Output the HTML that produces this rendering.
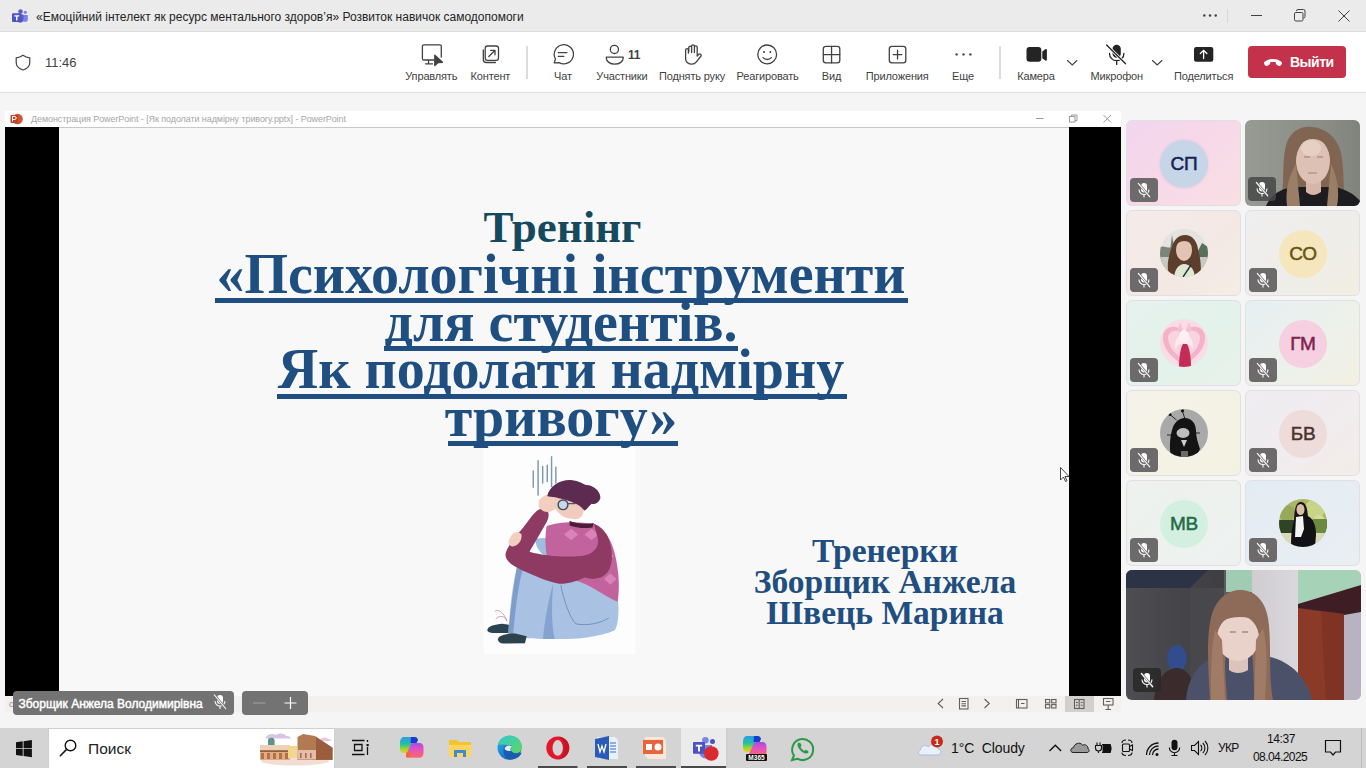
<!DOCTYPE html>
<html><head><meta charset="utf-8">
<style>
*{box-sizing:border-box;margin:0;padding:0}
html,body{width:1366px;height:768px;overflow:hidden;background:#f5f5f5;font-family:"Liberation Sans",sans-serif;position:relative}
.a{position:absolute}
#titlebar{left:0;top:0;width:1366px;height:31px;background:#ebebeb}
#toolbar{left:0;top:31px;width:1366px;height:62px;border-top:1px solid #dedede;background:#fff;border-bottom:1px solid #e0e0e0}
.lbl{position:absolute;font-size:11px;color:#424242;white-space:nowrap;transform:translateX(-50%);top:70px;letter-spacing:-0.15px}
.slide-t{position:absolute;white-space:nowrap;font-family:"Liberation Serif",serif;font-weight:bold;line-height:1}
.tile{position:absolute;width:115px;height:86px;border-radius:6px;border:1px solid #e2dfe2;overflow:hidden}
.av{position:absolute;left:33px;top:19px;width:48px;height:48px;border-radius:50%;text-align:center;line-height:48px;font-size:19px;-webkit-text-stroke:0.5px currentColor;letter-spacing:-0.2px}
.mute{position:absolute;left:2.5px;top:57px;width:28px;height:24px;border-radius:4px;background:rgba(90,90,90,.8)}
.tb{position:absolute;top:728px;height:40px}
</style></head>
<body>
<!-- title bar -->
<div id="titlebar" class="a"></div>
<svg class="a" style="left:0;top:0" width="1366" height="31" viewBox="0 0 1366 31">
 <g fill="#5b5fc7">
  <circle cx="20.5" cy="11.5" r="2.3"/>
  <circle cx="25.3" cy="12.3" r="1.6" fill="#7b83eb"/>
  <path d="M22.5 15h5.3v4.2a2.6 2.6 0 0 1-5.3 0z" fill="#7b83eb"/>
  <path d="M17 14.5h6.5v5.5a3.3 3.3 0 0 1-6.5 0z" fill="#5b5fc7"/>
  <rect x="12" y="13.2" width="9.5" height="8.8" rx="1" fill="#4b53bc"/>
  <path d="M14.3 15.2h5v1.4h-1.8v4h-1.4v-4h-1.8z" fill="#fff"/>
 </g>
 <g fill="#424242"><circle cx="1204.3" cy="15.6" r="1.25"/><circle cx="1210" cy="15.6" r="1.25"/><circle cx="1215.7" cy="15.6" r="1.25"/></g>
 <line x1="1227.5" y1="9" x2="1227.5" y2="23" stroke="#d6d6d6"/>
 <line x1="1251" y1="15.5" x2="1262" y2="15.5" stroke="#424242" stroke-width="1"/>
 <g fill="none" stroke="#424242" stroke-width="1">
  <rect x="1294.5" y="12.5" width="8.5" height="8.5" rx="1.3"/>
  <path d="M1296.5 11.2 v-0.2 a1.5 1.5 0 0 1 1.5-1.5 h5.5 a1.5 1.5 0 0 1 1.5 1.5 v5.5 a1.5 1.5 0 0 1-1.5 1.5"/>
  <path d="M1338.5 10.5 l11 11 M1349.5 10.5 l-11 11"/>
 </g>
</svg>
<div class="a" style="left:36px;top:10px;font-size:12px;color:#242424;white-space:nowrap;line-height:15px">«Емоційний інтелект як ресурс ментального здоров’я» Розвиток навичок самодопомоги</div>
<!-- toolbar -->
<div id="toolbar" class="a"></div>
<svg class="a" style="left:0;top:31px" width="1366" height="61" viewBox="0 31 1366 61">
 <g fill="none" stroke="#424242" stroke-width="1.2" stroke-linecap="round" stroke-linejoin="round">
  <path d="M23 56.5 C19.5 55.5 16.3 53.8 16.3 53.8 V60.8 C16.3 65.5 19.5 68.5 23 69.8 C26.5 68.5 29.7 65.5 29.7 60.8 V57.8 C26.5 57.3 24.5 56.5 23 55.5 C21.5 56.5 19.5 57.3 16.3 57.8" stroke="none"/>
  <path d="M23 55.3 C25 56.8 27.3 57.6 29.8 57.8 V62.5 C29.8 66 27 68.8 23 70 C19 68.8 16.2 66 16.2 62.5 V57.8 C18.7 57.6 21 56.8 23 55.3Z"/>
 </g>
 <g fill="none" stroke="#424242" stroke-width="1.3" stroke-linecap="round" stroke-linejoin="round">
  <!-- manage -->
  <path d="M434 60 H424 a1.6 1.6 0 0 1-1.6-1.6 V46.4 a1.6 1.6 0 0 1 1.6-1.6 h15.7 a1.6 1.6 0 0 1 1.6 1.6 V57"/>
  <path d="M428.5 60.5 v3.2 M425.5 63.8 h7"/>
  <path d="M434.8 55.2 L442.5 62.3 L438.2 62.6 L434.8 65.6Z" fill="#424242"/>
  <!-- content -->
  <path d="M483.3 50 v9.5 a3 3 0 0 0 3 3 h9.2"/>
  <rect x="485.2" y="46" width="13.3" height="14.3" rx="2.3"/>
  <path d="M488.8 56.5 l6-6 M490.5 50.3 h4.5 v4.5"/>
  <!-- divider -->
  <!-- chat -->
  <path d="M554.2 62.8 l1.3-3.8 a9.6 9.6 0 1 1 3.6 3.6 z"/>
  <path d="M558.3 52.6 h8.6 M558.3 56.4 h5.5"/>
  <!-- participants -->
  <circle cx="614.4" cy="49.4" r="4.1"/>
  <path d="M606.3 57.2 h16.9 v0.9 c0 3.4-3.7 6-8.45 6 c-4.75 0-8.45-2.6-8.45-6z"/>
  <!-- hand -->
  <path d="M688.8 52 V47.5 a1.4 1.4 0 0 1 2.8 0 V52.5 M691.6 52 V46.2 a1.4 1.4 0 0 1 2.8 0 V52.5 M694.4 52.5 V47.3 a1.4 1.4 0 0 1 2.8 0 V56 l1.6-1.7 a1.4 1.4 0 0 1 2.2 1.7 l-4.6 5.8 c-1.1 1.4-2.3 2.3-4.6 2.3 h-0.8 c-3 0-5.4-2.4-5.4-5.4 V50 a1.4 1.4 0 0 1 2.8 0 V53"/>
  <!-- react -->
  <circle cx="767.2" cy="54.4" r="9.4"/>
  <path d="M763 57.6 c2.4 2.5 6 2.5 8.4 0"/>
  <!-- view -->
  <rect x="823.3" y="46.3" width="16.5" height="16.5" rx="2.6"/>
  <path d="M831.55 46.3 v16.5 M823.3 54.55 h16.5"/>
  <!-- apps -->
  <rect x="889.3" y="46.3" width="16.5" height="16.5" rx="2.6"/>
  <path d="M897.55 50.2 v8.7 M893.2 54.55 h8.7"/>
  <!-- share arrow -->
 </g>
 <g fill="#424242">
  <circle cx="764" cy="51.9" r="1"/><circle cx="770.4" cy="51.9" r="1"/>
  <circle cx="956.6" cy="54.4" r="1.2"/><circle cx="963.5" cy="54.4" r="1.2"/><circle cx="970.4" cy="54.4" r="1.2"/>
 </g>
 <line x1="527" y1="46" x2="527" y2="79" stroke="#d1d1d1" stroke-width="1.5"/>
 <line x1="1000" y1="46" x2="1000" y2="79" stroke="#d1d1d1" stroke-width="1.5"/>
 <g fill="#242424">
  <rect x="1026.5" y="47" width="14.8" height="14.8" rx="3"/>
  <path d="M1042.3 51.5 l3-2.3 a1 1 0 0 1 1.6 0.8 v9.7 a1 1 0 0 1-1.6 0.8 l-3-2.3z"/>
  <rect x="1112.5" y="44.8" width="8.3" height="13" rx="4.15"/>
  <rect x="1194" y="47" width="19.3" height="14.8" rx="2.2"/>
 </g>
 <g fill="none" stroke="#242424" stroke-width="1.3" stroke-linecap="round">
  <path d="M1067.5 60.5 l4.7 4.5 l4.7-4.5 M1152.5 60.5 l4.7 4.5 l4.7-4.5" stroke="#424242" stroke-width="1.1"/>
  <path d="M1109.5 53.5 a7.2 7.2 0 0 0 14.4 0 M1116.7 60.8 v3.6"/>
  <path d="M1106.6 45 l19 18.7" stroke="#fff" stroke-width="3"/>
  <path d="M1106.6 45 l19 18.7"/>
  <path d="M1203.6 58.5 v-8 M1200.3 53.5 l3.3-3.2 l3.3 3.2" stroke="#fff" stroke-width="1.3"/>
 </g>
</svg>
<div class="a" style="left:45px;top:55px;font-size:13px;color:#424242;line-height:16px">11:46</div>
<div class="a" style="left:628px;top:48px;font-size:12px;font-weight:bold;color:#424242;line-height:14px;letter-spacing:-0.3px">11</div>
<div class="lbl" style="left:431.3px">Управлять</div>
<div class="lbl" style="left:490.4px">Контент</div>
<div class="lbl" style="left:563px">Чат</div>
<div class="lbl" style="left:621.9px">Участники</div>
<div class="lbl" style="left:692px">Поднять руку</div>
<div class="lbl" style="left:767.6px">Реагировать</div>
<div class="lbl" style="left:831.6px">Вид</div>
<div class="lbl" style="left:897.2px">Приложения</div>
<div class="lbl" style="left:963px">Еще</div>
<div class="lbl" style="left:1036px">Камера</div>
<div class="lbl" style="left:1116.8px">Микрофон</div>
<div class="lbl" style="left:1203.6px">Поделиться</div>
<div class="a" style="left:1248px;top:46px;width:98px;height:32px;background:#c4314b;border-radius:4px"></div>
<svg class="a" style="left:1262px;top:55px" width="22" height="14" viewBox="0 0 22 14">
 <path d="M2.5 9.5 c-0.8-0.9-0.6-2.3 0.4-3 C5.3 4.8 8 4 11 4 s5.7 0.8 8.1 2.5 c1 0.7 1.2 2.1 0.4 3 l-0.9 1 c-0.6 0.6-1.5 0.7-2.2 0.3 l-1.9-1.2 c-0.6-0.4-0.9-1-0.8-1.7 l0.1-0.8 C12.6 6.8 9.4 6.8 8.2 7.1 l0.1 0.8 c0.1 0.7-0.2 1.3-0.8 1.7 L5.6 10.8 c-0.7 0.4-1.6 0.3-2.2-0.3z" fill="#fff"/>
</svg>
<div class="a" style="left:1290px;top:54px;font-size:14px;font-weight:bold;color:#fff;line-height:17px;letter-spacing:-0.5px">Выйти</div>

<!-- main bg -->
<!-- ppt window -->
<div class="a" style="left:5px;top:111px;width:1116px;height:16px;background:#fff"></div>
<svg class="a" style="left:5px;top:111px" width="1116" height="16" viewBox="5 111 1116 16">
 <circle cx="17.5" cy="119" r="5.3" fill="#d35230"/>
 <rect x="10.5" y="115" width="7.5" height="8" rx="1" fill="#b7472a"/>
 <path d="M12.5 121.5 v-5 h2.2 a1.5 1.5 0 0 1 0 3 h-2.2" fill="none" stroke="#fff" stroke-width="1"/>
 <g fill="none" stroke="#9a9a9a" stroke-width="1">
  <path d="M1036 118.5 h7.5"/>
  <rect x="1069.5" y="116.5" width="5.5" height="5.5"/><path d="M1071.5 116.5 v-1.5 h5.5 v5.5 h-2"/>
  <path d="M1103.5 115 l7.5 7.5 M1111 115 l-7.5 7.5"/>
 </g>
</svg>
<div class="a" style="left:31px;top:114px;font-size:9px;color:#a6a6a6;line-height:11px;white-space:nowrap;letter-spacing:-0.09px">Демонстрация PowerPoint - [Як подолати надмірну тривогу.pptx] - PowerPoint</div>
<div class="a" style="left:5px;top:127px;width:54px;height:569px;background:#000"></div>
<div class="a" style="left:59px;top:127px;width:1010px;height:569px;background:#f8f8f8;border-top:1px solid #c8c8c8"></div>
<div class="a" style="left:1069px;top:127px;width:52px;height:569px;background:#000"></div>
<!-- illustration -->
<svg class="a" style="left:478px;top:440px" width="162" height="220" viewBox="0 0 566 768">
 <rect x="20" y="25" width="530" height="722" fill="#fdfdfd"/>
 <g stroke="#6f8fa8" stroke-width="5" stroke-linecap="round" opacity=".9">
  <path d="M193 108 V165 M210 72 V192 M226 92 V150 M242 88 V145 M257 58 V162 M272 95 V150"/>
 </g>
 <!-- jeans -->
 <path d="M140 425 C180 415 230 420 260 440 C330 480 420 520 488 545 C495 610 488 650 478 664 C420 690 340 696 268 695 L227 695 C180 695 130 690 106 684 C110 600 120 500 140 425Z" fill="#a9c1e2"/>
 <path d="M140 425 C125 500 112 600 106 684 L122 686 C130 600 140 500 160 440Z" fill="#7f9dcb"/>
 <path d="M263 501 C245 560 232 640 227 695 L268 695 C255 640 258 560 263 501Z" fill="#86a3d0"/>
 <path d="M289 506 C300 560 320 620 342 642 C380 650 430 640 457 621" fill="none" stroke="#6a88b8" stroke-width="3"/>
 <path d="M200 345 C250 335 300 350 330 395 L240 410 C215 395 200 370 200 345Z" fill="#9fbde0"/>
 <!-- shoes -->
 <path d="M33 662 C36 650 60 644 85 642 L108 645 L106 674 L50 674 C38 673 31 668 33 662Z" fill="#2b4550"/>
 <path d="M70 694 C74 682 100 676 130 676 L170 685 L164 710 L88 711 C76 710 68 702 70 694Z" fill="#2a434d"/>
 <path d="M59 598 C70 590 90 600 101 632 M62 625 C75 610 95 615 101 632" fill="none" stroke="#c890a8" stroke-width="3"/>
 <!-- sweater body -->
 <path d="M240 300 C280 285 350 282 410 295 C455 315 480 380 488 450 C495 500 492 540 488 565 C450 548 410 520 380 505 C330 485 280 470 250 440 C235 400 232 340 240 300Z" fill="#c2639e"/>
 <g fill="#d983b6">
  <path d="M300 330 l25 -20 l25 20 l-25 20z M372 330 l25 -20 l25 20 l-25 20z M425 405 l25 -20 l25 20 l-25 20z M440 485 l22 -20 l22 20 l-22 20z M400 458 l22 -18 l22 18 l-22 18z"/>
 </g>
 <!-- arm -->
 <path d="M405 292 C450 310 472 360 467 420 C462 470 430 495 373 480 C330 500 290 505 279 501 C230 490 190 470 164 459 C120 440 96 423 96 400 C98 370 150 320 185 270 C200 250 215 235 235 240 C250 248 250 270 238 290 C215 330 195 365 180 390 C230 405 300 410 360 405 C400 400 420 380 420 350Z" fill="#8e3a62"/>
 <path d="M320 282 C340 292 380 295 405 290 L400 305 C370 310 340 305 320 298Z" fill="#4e1c3a"/>
 <!-- hands -->
 <path d="M212 212 C232 186 272 180 302 195 L307 220 C292 235 272 240 252 250 C237 255 217 245 212 232Z" fill="#f3cfc0"/>
 <path d="M108 350 C118 320 140 315 152 330 C155 350 140 370 120 372 C110 370 105 360 108 350Z" fill="#f3cfc0"/>
 <!-- head -->
 <path d="M267 205 C300 208 345 212 368 238 C372 262 357 278 337 276 C300 275 278 258 267 232Z" fill="#f1cbbb"/>
 <path d="M242 195 C250 160 290 135 330 140 C350 143 365 150 377 157 C400 155 432 180 427 205 C420 222 405 226 397 222 C385 232 375 250 370 245 C352 218 300 208 270 200 C258 198 248 198 242 195Z" fill="#5d2a52"/>
 <circle cx="297" cy="226" r="17" fill="#c8d8e8" stroke="#3f4f63" stroke-width="5"/>
 <path d="M314 222 H340" stroke="#3f4f63" stroke-width="4"/>
</svg>
<!-- slide text -->
<div class="slide-t" style="left:0;width:1125px;text-align:center;top:205px;font-size:45px;color:#154a5e">Тренінг</div>
<div class="slide-t" style="left:0;width:1122px;text-align:center;top:246px;font-size:56px;color:#1f4e80">«Психологічні інструменти</div>
<div class="slide-t" style="left:0;width:1122px;text-align:center;top:294px;font-size:56px;color:#1f4e80">для студентів.</div>
<div class="slide-t" style="left:0;width:1122px;text-align:center;top:341px;font-size:56px;color:#1f4e80">Як подолати надмірну</div>
<div class="slide-t" style="left:0;width:1122px;text-align:center;top:389px;font-size:56px;color:#1f4e80">тривогу»</div>
<div class="a" style="left:215px;top:298px;width:693px;height:5px;background:#1f4e80"></div>
<div class="a" style="left:384px;top:346px;width:354px;height:4.5px;background:#1f4e80"></div>
<div class="a" style="left:277px;top:394px;width:570px;height:4.5px;background:#1f4e80"></div>
<div class="a" style="left:448px;top:441px;width:230px;height:5px;background:#1f4e80"></div>
<div class="slide-t" style="left:0;width:1770px;text-align:center;top:535px;font-size:33.5px;color:#1f4e80;line-height:31px">Тренерки<br>Зборщик Анжела<br>Швець Марина</div>
<div class="a" style="left:5px;top:696px;width:1116px;height:16px;background:#f3f1f0"></div>

<svg class="a" style="left:1060px;top:467px" width="10" height="16" viewBox="0 0 10 16"><path d="M0.5 0.5 V13 L3.5 10 L5.5 14.5 L7 13.8 L5 9.5 H9Z" fill="#fff" stroke="#333" stroke-width="0.9"/></svg>
<!-- gallery -->
<svg width="0" height="0" style="position:absolute">
 <defs>
  <symbol id="micoff" viewBox="0 0 28 24">
   <rect x="11" y="5" width="6" height="9.5" rx="3" fill="#fff"/>
   <path d="M9 11.5 a5 5 0 0 0 10 0 M14 16.5 v3" fill="none" stroke="#fff" stroke-width="1.1"/>
   <path d="M8.3 5.3 L19.8 18.8" stroke="#6d6a6b" stroke-width="2.4"/>
   <path d="M8.3 5.3 L19.8 18.8" stroke="#fff" stroke-width="1.1" stroke-linecap="round"/>
  </symbol>
 </defs>
</svg>
<div class="tile" style="left:1126px;top:120px;background:linear-gradient(135deg,#f2d6ee 0%,#f7d8e8 50%,#f8e0e4 100%)">
 <div class="av" style="background:#c7d5e8;color:#13244f;box-shadow:0 0 3px rgba(0,0,0,.08)">СП</div>
 <svg class="mute" style="background:#6d6a6b" viewBox="0 0 28 24"><use href="#micoff"/></svg>
</div>
<div class="tile" style="left:1245px;top:120px;background:linear-gradient(90deg,#979b94 0%,#8f938c 35%,#8b8d85 70%,#80837c 100%);border:none">
 <svg class="a" style="left:0;top:0" width="116" height="86" viewBox="0 0 116 86">
  <path d="M36 86 C40 64 36 40 42 22 C47 10 57 6 67 7 C81 8 92 17 96 33 C100 52 97 70 102 86Z" fill="#806652"/>
  <path d="M21 86 C26 74 36 69 48 67 L88 67 C102 69 110 75 116 82 V86Z" fill="#1d1d21"/>
  <path d="M61 58 H76 V72 C70 76 66 76 61 72Z" fill="#d6b6a8"/>
  <ellipse cx="68" cy="41" rx="17" ry="23" fill="#dcc1b4"/>
  <ellipse cx="66" cy="28" rx="10" ry="8" fill="#e6d0c4"/>
  <path d="M51 36 C50 20 58 11 68 11 C80 11 88 20 87 36 C84 26 80 20 68 19 C58 19 53 26 51 36Z" fill="#806652"/>
  <path d="M42 86 C40 70 44 56 51 44 L55 86Z M92 86 C95 72 92 56 86 44 L82 86Z" fill="#9a7e68"/>
  <path d="M59 37 h6 M72 37 h6" stroke="#9a7c70" stroke-width="1.2"/>
  <path d="M63 53 h9" stroke="#b8958a" stroke-width="1.5"/>
 </svg>
 <svg class="mute" style="background:rgba(70,72,70,.85)" viewBox="0 0 28 24"><use href="#micoff"/></svg>
</div>
<div class="tile" style="left:1126px;top:210px;background:linear-gradient(135deg,#f5ebe8 0%,#f3e8e4 60%,#f5ede6 100%)">
 <svg class="a" style="left:33px;top:18px" width="48" height="48" viewBox="0 0 48 48">
  <defs><clipPath id="cC"><circle cx="24" cy="24" r="24"/></clipPath></defs>
  <g clip-path="url(#cC)">
   <rect width="48" height="48" fill="#e4e3df"/>
   <path d="M0 18 C4 16 8 20 12 18 V48 H0Z" fill="#7a8478"/>
   <path d="M9 30 L12 6 L16 30Z" fill="#6a7868"/>
   <path d="M36 26 L42 14 L48 18 V30 H36Z" fill="#58705a"/>
   <rect x="0" y="28" width="48" height="20" fill="#c8cac2"/>
   <path d="M9 46 C6 36 9 26 12 18 C14 10 19 6 25 6 C32 6 37 12 38 20 C40 28 42 38 40 46Z" fill="#5d3d2c"/>
   <ellipse cx="24" cy="21" rx="8" ry="11" fill="#e3c3b3"/>
   <path d="M15 18 C16 10 20 7 25 7 C30 7 33 11 33 17 C30 13 27 12 24 12 C20 12 17 14 15 18Z" fill="#5d3d2c"/>
   <path d="M14 48 C15 40 19 35 24 35 C30 35 34 40 35 48Z" fill="#dfe8d2"/>
   <path d="M31 36 L23 48" stroke="#263030" stroke-width="1.4"/>
  </g>
 </svg>
 <svg class="mute" style="background:#6d6a6b" viewBox="0 0 28 24"><use href="#micoff"/></svg>
</div>
<div class="tile" style="left:1245px;top:210px;background:linear-gradient(135deg,#f0eff0 0%,#eeede8 60%,#f1efe2 100%)">
 <div class="av" style="background:#f5e6bd;color:#6b5416">СО</div>
 <svg class="mute" style="background:#6d6a6b" viewBox="0 0 28 24"><use href="#micoff"/></svg>
</div>
<div class="tile" style="left:1126px;top:300px;background:linear-gradient(135deg,#e6f2ee 0%,#e3f2ea 60%,#e8f2ea 100%)">
 <svg class="a" style="left:33px;top:18px" width="48" height="48" viewBox="0 0 48 48">
  <defs><clipPath id="cE"><circle cx="24" cy="24" r="24"/></clipPath></defs>
  <g clip-path="url(#cE)">
   <rect width="48" height="48" fill="#f9dde6"/>
   <path d="M24 46 C10 38 2 28 3 17 C4 7 16 4 24 13 C32 4 44 7 45 17 C46 28 38 38 24 46Z" fill="#f2b2c8"/>
   <path d="M24 41 C13 34 8 26 8 18 C9 11 18 9 24 16 C30 9 39 11 40 18 C40 26 35 34 24 41Z" fill="#f8d4e0"/>
   <path d="M15 30 C14 22 18 16 24 14 C30 16 34 22 33 30 L30 26 L24 24 L18 26Z" fill="#fbeaf0"/>
   <path d="M19 48 C19 40 20 30 23 25 H27 C30 30 31 40 31 48Z" fill="#c42c58"/>
   <ellipse cx="24" cy="17" rx="5" ry="6" fill="#fdf0f4"/>
   <path d="M17 12 L20 3 L23 11Z M26 11 L29 3 L32 12Z" fill="#f6c2d4"/>
  </g>
 </svg>
 <svg class="mute" style="background:#6d6a6b" viewBox="0 0 28 24"><use href="#micoff"/></svg>
</div>
<div class="tile" style="left:1245px;top:300px;background:linear-gradient(135deg,#e6eff3 0%,#edf1ea 60%,#f2f0e2 100%)">
 <div class="av" style="background:#f6cfe0;color:#7b2348">ГМ</div>
 <svg class="mute" style="background:#6d6a6b" viewBox="0 0 28 24"><use href="#micoff"/></svg>
</div>
<div class="tile" style="left:1126px;top:390px;background:linear-gradient(135deg,#f5f2ea 0%,#f4f2e4 60%,#f3f2e2 100%)">
 <svg class="a" style="left:33px;top:18px" width="48" height="48" viewBox="0 0 48 48">
  <defs><clipPath id="cG"><circle cx="24" cy="24" r="24"/></clipPath></defs>
  <g clip-path="url(#cG)">
   <rect width="48" height="48" fill="#a9a9a9"/>
   <path d="M10 5.5 L16.5 11 M22 1 L25 10 M7 26 H13 M35 24 H40" stroke="#1a1a1a" stroke-width="0.9"/>
   <circle cx="10" cy="5.5" r="1.5" fill="#111"/><circle cx="22.5" cy="1.8" r="1.6" fill="#111"/>
   <path d="M11 48 C9 38 10 26 13 18 C16 11 21 9 25 9 C31 9 36 14 36 22 C36 28 38 34 40 40 L36 48Z" fill="#141414"/>
   <ellipse cx="23" cy="24" rx="6.5" ry="5" fill="#bdbdbd"/>
   <path d="M16 22 C17 15 21 12 25 12 C29 12 31 16 31 21 C28 18 24 17 21 19Z" fill="#141414"/>
   <path d="M21 31 L24 38 L27 31Z" fill="#cfcfcf"/>
   <path d="M21 48 V42 H28 V48Z" fill="#6a6a6a"/>
  </g>
 </svg>
 <svg class="mute" style="background:#6d6a6b" viewBox="0 0 28 24"><use href="#micoff"/></svg>
</div>
<div class="tile" style="left:1245px;top:390px;background:linear-gradient(135deg,#eeedf1 0%,#f1ecee 60%,#f3ede8 100%)">
 <div class="av" style="background:#eddcd9;color:#4a3330">БВ</div>
 <svg class="mute" style="background:#6d6a6b" viewBox="0 0 28 24"><use href="#micoff"/></svg>
</div>
<div class="tile" style="left:1126px;top:480px;background:linear-gradient(135deg,#eef1ee 0%,#edf2ef 60%,#eef1f1 100%)">
 <div class="av" style="background:#d3efdf;color:#1f6a45">МВ</div>
 <svg class="mute" style="background:#6d6a6b" viewBox="0 0 28 24"><use href="#micoff"/></svg>
</div>
<div class="tile" style="left:1245px;top:480px;background:linear-gradient(135deg,#e4ecf3 0%,#e6edf3 60%,#e9eef1 100%)">
 <svg class="a" style="left:33px;top:18px" width="48" height="48" viewBox="0 0 48 48">
  <defs><clipPath id="cJ"><circle cx="24" cy="24" r="24"/></clipPath></defs>
  <g clip-path="url(#cJ)">
   <rect width="48" height="48" fill="#a9b866"/>
   <circle cx="36" cy="10" r="10" fill="#c8d488"/><circle cx="8" cy="14" r="8" fill="#98a858"/>
   <circle cx="40" cy="22" r="6" fill="#d4dc98"/>
   <rect x="0" y="21" width="48" height="13" fill="#2e4424"/>
   <rect x="34" y="20" width="14" height="14" fill="#6a8a40"/>
   <rect x="0" y="34" width="48" height="14" fill="#d8dab8"/>
   <path d="M15 24 C15 10 17 3 22 3 C27 3 29 10 29 22 Z" fill="#1a1414"/>
   <ellipse cx="21.5" cy="10.5" rx="4" ry="5.5" fill="#dcbcaa"/>
   <path d="M12 48 C12 34 13 22 18 17 L26 16 C34 18 37 26 37 36 L36 48Z" fill="#121216"/>
   <path d="M17 18 L24 17 L25 30 L22 38 H16Z" fill="#f4f4f2"/>
  </g>
 </svg>
 <svg class="mute" style="background:#6d6a6b" viewBox="0 0 28 24"><use href="#micoff"/></svg>
</div>
<div class="a" style="left:1126px;top:570px;width:235px;height:130px;border-radius:6px;overflow:hidden">
 <svg class="a" style="left:0;top:0" width="235" height="130" viewBox="0 0 235 130">
  <defs>
   <linearGradient id="wallL" x1="0" y1="0" x2="1" y2="0"><stop offset="0" stop-color="#4e4d52"/><stop offset="1" stop-color="#3e3d42"/></linearGradient>
   <linearGradient id="wallW" x1="0" y1="0" x2="1" y2="0"><stop offset="0" stop-color="#cfcdd2"/><stop offset="1" stop-color="#dad8dc"/></linearGradient>
  </defs>
  <rect width="235" height="130" fill="#cbc7cc"/>
  <rect x="0" y="0" width="100" height="130" fill="url(#wallL)"/>
  <path d="M0 0 H82 L64 18 H0Z" fill="#2c3344"/>
  <rect x="64" y="18" width="36" height="112" fill="#48474c"/>
  <rect x="98" y="0" width="30" height="130" fill="#5c5b60"/>
  <path d="M100 0 H128 V22 H100Z" fill="#9fccb2"/>
  <rect x="126" y="0" width="48" height="130" fill="url(#wallW)"/>
  <path d="M172 0 H235 V15 L172 34Z" fill="#a6d2b8"/>
  <path d="M172 34 L235 15 V130 H172Z" fill="#b9b2c0"/>
  <path d="M172 34 L235 15 V42 L218 45 L172 40Z" fill="#3e1e24"/>
  <path d="M172 38 L218 44 V130 H172Z" fill="#8a3a26"/>
  <path d="M195 42 L218 44 V130 H200Z" fill="#7a3024" opacity=".7"/>
  <ellipse cx="51" cy="88" rx="10" ry="13" fill="#2f4d9a" opacity=".85"/>
  
  <path d="M28 130 C30 108 40 98 52 98 C64 100 70 114 70 130Z" fill="#3b2b2d"/>
  <path d="M60 130 C62 104 76 90 94 85 H134 C160 88 180 104 186 130Z" fill="#4b5169"/>
  <path d="M84 130 C82 96 80 64 86 44 C92 26 104 20 114 20 C128 20 139 30 142 48 C146 72 142 104 147 130 H129 C127 112 128 96 126 84 H100 C98 96 100 112 101 130Z" fill="#8d6b58"/>
  <path d="M103 78 H122 V100 C116 104 108 104 103 100Z" fill="#dcc3bb"/>
  <ellipse cx="112" cy="68" rx="21" ry="23" fill="#e9d2ca"/>
  <path d="M86 60 C88 32 100 22 114 22 C130 22 140 34 140 60 C134 52 128 47 114 47 C100 47 94 52 86 60Z" fill="#8d6b58"/>
  <path d="M85 130 C85 100 85 78 89 60 L96 70 L99 130Z M139 130 C141 100 142 78 137 58 L130 70 L128 130Z" fill="#a07c66"/>
  <path d="M104 62 h6 M116 62 h6" stroke="#8a6a62" stroke-width="1.2"/>
 </svg>
 <svg class="mute" style="left:7px;top:98px;background:rgba(40,40,40,.85)" viewBox="0 0 28 24"><use href="#micoff"/></svg>
</div>
<!-- ppt status bar -->
<svg class="a" style="left:925px;top:694px" width="200" height="20" viewBox="925 694 200 20">
 <rect x="1065" y="696" width="29" height="16" fill="#d2d0ce"/>
 <g fill="none" stroke="#5f5f5f" stroke-width="1.1">
  <path d="M943 699 l-4.8 4.5 l4.8 4.5 M984.5 699 l4.8 4.5 l-4.8 4.5"/>
  <rect x="959.5" y="698.5" width="8.5" height="10.5"/>
  <path d="M961.5 701.5 h4.5 M961.5 703.7 h4.5 M961.5 705.9 h4.5"/>
  <rect x="1016.5" y="699.5" width="10.5" height="8.5"/>
  <path d="M1018.5 699.5 v8.5 M1021 703.5 h3.5"/>
  <rect x="1045.5" y="699.5" width="4.3" height="3.4"/><rect x="1051.7" y="699.5" width="4.3" height="3.4"/>
  <rect x="1045.5" y="704.6" width="4.3" height="3.4"/><rect x="1051.7" y="704.6" width="4.3" height="3.4"/>
  <rect x="1074.5" y="699.5" width="9.5" height="9"/><path d="M1079.2 699.5 v9 M1076 702.5 h1.8 M1080.8 702.5 h1.8 M1076 705.2 h1.8 M1080.8 705.2 h1.8"/>
  <rect x="1103.5" y="698.5" width="9.5" height="6.5"/><path d="M1108.2 705 v4 M1105.5 709.5 h5.5 M1106 701.5 h4.5"/>
 </g>
</svg>
<div class="a" style="left:13px;top:691px;width:221px;height:24px;background:#737373;border-radius:4px"></div>
<div class="a" style="left:9px;top:699px;font-size:9px;color:#8a8a8a;line-height:10px">с</div>
<div class="a" style="left:18.5px;top:697px;font-size:12px;-webkit-text-stroke:0.45px #fff;color:#fff;line-height:14px;white-space:nowrap">Зборщик Анжела Володимирівна</div>
<svg class="a" style="left:212px;top:693px" width="16" height="18" viewBox="0 0 16 18">
 <rect x="5" y="2" width="6" height="9" rx="3" fill="#fff"/>
 <path d="M3 8 a5 5 0 0 0 10 0 M8 13 v3" fill="none" stroke="#fff" stroke-width="1.1"/>
 <path d="M2 1.5 L14 16" stroke="#737373" stroke-width="2.5"/><path d="M2 1.5 L14 16" stroke="#fff" stroke-width="1.1"/>
</svg>
<div class="a" style="left:242px;top:691px;width:66px;height:24px;background:#737373;border-radius:4px"></div>
<svg class="a" style="left:242px;top:691px" width="66" height="24" viewBox="0 0 66 24">
 <path d="M11 12 h12.5" stroke="#9c9c9c" stroke-width="1.2"/>
 <path d="M42.5 12 h12 M48.5 6 v12" stroke="#fff" stroke-width="1.2"/>
</svg>

<!-- taskbar -->
<div class="a" style="left:0;top:728px;width:1366px;height:40px;background:#d4d4d4"></div>
<div class="a" style="left:681px;top:728px;width:45px;height:40px;background:#ebebeb"></div>
<div class="a" style="left:726px;top:728px;width:2px;height:40px;background:#d0d0d0"></div>
<div class="a" style="left:48px;top:728px;width:287px;height:40px;background:#fff;border:1px solid #cfcfcf;border-bottom:none"></div>
<svg class="a" style="left:0;top:728px" width="1366" height="40" viewBox="0 728 1366 40">
 <!-- windows logo -->
 <g fill="#111">
  <path d="M16 742.2 l6.7-0.9 v6.9 h-6.7z M23.6 741.2 l8.3-1.2 v8.2 h-8.3z M16 749 h6.7 v6.9 l-6.7-0.9z M23.6 749 h8.3 v8.2 l-8.3-1.2z"/>
 </g>
 <!-- search -->
 <circle cx="70.5" cy="745.5" r="5.3" fill="none" stroke="#111" stroke-width="1.4"/>
 <path d="M66.6 749.4 l-6.3 6.3" stroke="#111" stroke-width="1.5" stroke-linecap="round"/>
 <!-- buildings -->
 <g>
  <path d="M266 737 c2-3 7-4 10-2 c3-2 8-2 10 1 c3 0 5 1 5 2.5 h-25z" fill="#cdb6dc" opacity=".8"/>
  <path d="M320 740 c2-3 6-3 8-1 c2 0 4 1 4 2 h-12z" fill="#e0b8dc" opacity=".8"/>
  <ellipse cx="295" cy="761" rx="34" ry="4.5" fill="#f2ddd4"/>
  <path d="M260 745 h30 v15 h-30z" fill="#dcae88"/>
  <path d="M260 745 h30 v5 h-30z" fill="#ecd2b8"/>
  <path d="M260 750.5 h30 v1.2 h-30z" fill="#6e3e22"/>
  <path d="M268 741 a3.3 3.3 0 0 1 6.6 0 v4 h-6.6z" fill="#5c9488"/>
  <g fill="#b86e40"><rect x="261" y="753" width="3" height="6"/><rect x="267" y="753" width="3" height="6"/><rect x="273" y="753" width="3" height="6"/><rect x="279" y="753" width="3" height="6"/><rect x="285" y="753" width="3" height="6"/></g>
  <path d="M288 746 h9 v12 h-9z" fill="#f2d68e"/>
  <path d="M297.5 737 l5.5-3 l12 2 l17.5 11.8 v12.2 h-35z" fill="#b27a52"/>
  <path d="M316 737 l16.5 10.8 v12 h-16.5z" fill="#9a5e3c"/>
  <path d="M297.5 750 h18.5 v9.5 h-18.5z" fill="#e4bcaa"/>
  <g fill="#a86a58"><rect x="300" y="753" width="1.6" height="5"/><rect x="305" y="753" width="1.6" height="5"/><rect x="310" y="753" width="1.6" height="5"/></g>
 </g>
 <!-- task view -->
 <g fill="none" stroke="#111" stroke-width="1.3">
  <path d="M352 740.5 h12.5 M352 754.5 h12.5 M354.5 744.5 h7.5 v6 h-7.5z M367.5 740 v2 M367.5 747 v8"/>
 </g>
 <rect x="366.5" y="744" width="2.2" height="2.2" fill="#111"/>
 <!-- copilot -->
 <defs>
  <linearGradient id="cpA" x1="0" y1="0" x2="0" y2="1"><stop offset="0" stop-color="#2a9ee8"/><stop offset=".45" stop-color="#26c0a0"/><stop offset=".75" stop-color="#9ad82a"/><stop offset="1" stop-color="#f0d020"/></linearGradient>
  <linearGradient id="cpB" x1="0" y1="0" x2="0" y2="1"><stop offset="0" stop-color="#a050e0"/><stop offset=".4" stop-color="#e050c8"/><stop offset="1" stop-color="#ff6a60"/></linearGradient>
  <linearGradient id="edg" x1="0" y1="0" x2="1" y2="1"><stop offset="0" stop-color="#30b0e8"/><stop offset=".5" stop-color="#1a80d0"/><stop offset="1" stop-color="#0c4ea0"/></linearGradient>
  <linearGradient id="edg2" x1="0" y1="0" x2="1" y2="1"><stop offset="0" stop-color="#30c8d0"/><stop offset="1" stop-color="#60d860"/></linearGradient>
 </defs>
 <path d="M404 737 h10 c2 0 3 1 3.5 3 l-4 11 c-0.7 1.5-2 2-3.5 2 h-6 c-2.5 0-4-2-4-4.5 v-6 c0-3 1.5-5.5 4-5.5z" fill="url(#cpA)"/>
 <path d="M411 737 h3.5 c2 0 3 1 3.5 3 l-1.5 3 h-6z" fill="#1a3ad0"/>
 <path d="M413.5 743 h6 c2.5 0 4 2 4 4.5 v5.5 c0 3-1.5 4.8-4 4.8 h-10 c-2 0-3-1-3.5-3 l4.5-9.5 c0.6-1.4 1.5-2.3 3-2.3z" fill="url(#cpB)"/>
 <path d="M406 752.5 h5 l-2 4.5 c-1 1.2-2.5 1-3-0.5z" fill="#f06a30"/>
 <!-- explorer -->
 <path d="M449 740 h8 l2 2 h12 v15 h-22z" fill="#f4c430"/>
 <path d="M449 745 h22 v12 h-22z" fill="#fcd55c"/>
 <path d="M454 750 h12 v7 h-3 v-4 h-6 v4 h-3z" fill="#3d8ad8"/>
 <!-- edge -->
 <circle cx="509.5" cy="747.7" r="12" fill="url(#edg)"/>
 <path d="M498 745 c1.5-6 6.5-9.5 12-9.5 c6.5 0 12 5 12 11.5 c0 4-3 6.5-7 6.5 c-3 0-5.5-1-6.5-3 c-1-1.8-0.5-3.5 1-4.5 c-3-1.5-8.5-2-11.5-1z" fill="url(#edg2)"/>
 <path d="M503.5 750 c0-3 2.5-5 5.5-5 c1.5 0 2.5 0.5 3 1 c-1.5 1-2 2.7-1 4.5 c1 2 3.5 3 6.5 3 c1.5 0 3-0.3 4.3-1 c-1.5 4-5.5 7-11 7 c-4.5 0-7.3-4-7.3-9.5z" fill="#1a5cb0"/>
 <path d="M504.5 749 c0.5-2 2-3.5 4.5-3.5 c1.3 0 2.2 0.4 2.8 0.9 c-1.4 1-1.8 2.6-1 4.3 c-2.5 0.5-5 0-6.3-1.7z" fill="#e6eef5"/>
 <!-- opera -->
 <ellipse cx="557.8" cy="747.9" rx="11.5" ry="11.5" fill="#e0182a"/>
 <ellipse cx="557.7" cy="747.9" rx="5.2" ry="7.8" fill="#d4d4d4"/>
 <path d="M557.8 736.4 a11.5 11.5 0 0 1 0 23 a6.5 11.5 0 0 0 0-23z" fill="#b81020" opacity=".6"/>
 <rect x="538" y="766" width="39.5" height="2" fill="#4a4a4a"/>
 <!-- word -->
 <path d="M597 737 h18 l3 3 v19 h-18 l-3-3z" fill="#e8f0fa"/>
 <path d="M595 739 l14-3 v24 l-14-3z" fill="#2b5bb8"/>
 <path d="M598 744 l2 8 l2-6 l2 6 l2-8" fill="none" stroke="#fff" stroke-width="1.3"/>
 <path d="M610 743 h6 M610 746 h6 M610 749 h6 M610 752 h6" stroke="#3b6bc8" stroke-width="1.2"/>
 <rect x="587" y="766" width="40" height="2" fill="#4a4a4a"/>
 <!-- powerpoint -->
 <path d="M645 737 h18 l3 3 v19 h-18 l-3-3z" fill="#fbe6d8"/>
 <path d="M643 740 h20 v14 h-20z" fill="#e8643a"/>
 <rect x="646" y="744" width="6" height="6" fill="#fff"/>
 <circle cx="658" cy="747" r="3.5" fill="#fff"/>
 <rect x="636" y="766" width="40" height="2" fill="#4a4a4a"/>
 <!-- teams -->
 <circle cx="705.4" cy="740.3" r="3.3" fill="#7b83eb"/>
 <circle cx="712.5" cy="741.6" r="2.5" fill="#4b53bc"/>
 <path d="M699 745 h13 v7 a6.5 6.5 0 0 1-13 0z" fill="#7b83eb"/>
 <rect x="693" y="742" width="12" height="11.7" rx="0.8" fill="#4b53bc"/>
 <path d="M695.8 744.8 h6.4 v1.7 h-2.3 v5 h-1.8 v-5 h-2.3z" fill="#fff"/>
 <circle cx="711.3" cy="753.5" r="7.3" fill="#d92a30"/>
 <rect x="681" y="766" width="45" height="2" fill="#4a4a4a"/>
 <!-- m365 -->
 <g transform="translate(343,-1)">
 <path d="M404 737 h10 c2 0 3 1 3.5 3 l-4 11 c-0.7 1.5-2 2-3.5 2 h-6 c-2.5 0-4-2-4-4.5 v-6 c0-3 1.5-5.5 4-5.5z" fill="url(#cpA)"/>
 <path d="M411 737 h3.5 c2 0 3 1 3.5 3 l-1.5 3 h-6z" fill="#1a3ad0"/>
 <path d="M413.5 743 h6 c2.5 0 4 2 4 4.5 v5.5 c0 3-1.5 4.8-4 4.8 h-10 c-2 0-3-1-3.5-3 l4.5-9.5 c0.6-1.4 1.5-2.3 3-2.3z" fill="url(#cpB)"/>
 </g>
 <rect x="746" y="754" width="21" height="7" rx="1" fill="#111"/>
 <text x="756.5" y="760" font-family="Liberation Sans" font-size="6.5" font-weight="bold" fill="#fff" text-anchor="middle">M365</text>
 <!-- whatsapp -->
 <path d="M794 755.5 a10.5 10.5 0 1 1 3.5 3.2 l-5.5 1.3z" fill="none" stroke="#2a9a48" stroke-width="2"/>
 <path d="M798.5 742.5 c-1 1-1.5 2.5-0.5 4.5 c1.2 2.6 3.5 4.8 6 6 c2 1 3.5 0.5 4.5-0.5 l-0.3-1.6 l-2.6-1.2 l-1.3 1.2 c-1.6-0.8-3-2.2-3.8-3.8 l1.2-1.3 l-1.2-2.6z" fill="#2a9a48"/>
 <!-- weather -->
 <path d="M921 755 c-3 0-3.5-4-0.5-5 c0-4 5-6 8-3 c2-4 9-3 9.5 2 c3 0 4 4 1 6z" fill="#e8f0fa" stroke="#a8c0e0" stroke-width="1"/>
 <circle cx="937" cy="741.5" r="6" fill="#c42b1c"/>
 <text x="937" y="745" font-family="Liberation Sans" font-size="9" font-weight="bold" fill="#fff" text-anchor="middle">1</text>
 <!-- chevron up -->
 <path d="M1049.5 751 l5.8-5.8 l5.8 5.8" fill="none" stroke="#111" stroke-width="1.4"/>
 <!-- onedrive -->
 <path d="M1073 752.5 c-3 0-3-4.5 0.5-5 c1-4 6-6 9-2.5 c3-1 6 1 5.5 4 c2 1 1 3.5-1 3.5z" fill="#999" stroke="#222" stroke-width="1"/>
 <!-- battery -->
 <path d="M1097 742.5 v3 M1100 742.5 v3 M1095.5 745.5 h6 v2.5 c0 2-1.5 3-3 3 s-3-1-3-3z M1098.5 751 v2" fill="none" stroke="#111" stroke-width="1.1"/>
 <rect x="1102.5" y="744.5" width="7.5" height="8" fill="#111"/>
 <path d="M1102 744.5 h8.5 v8 h-8.5" fill="none" stroke="#111" stroke-width="1"/>
 <rect x="1110.5" y="746.5" width="1" height="4" fill="#111"/>
 <!-- camera frame -->
 <g fill="none" stroke="#111" stroke-width="1.1">
  <path d="M1122 743 c0-2 2-3 4-3 M1132 743 c0-2-2-3-4-3 M1122 752.5 c0 2 2 3 4 3 M1132 752.5 c0 2-2 3-4 3"/>
  <rect x="1122.5" y="744" width="7" height="7.5" rx="1"/>
  <path d="M1129.5 746.5 l3-1.5 v5.5 l-3-1.5"/>
 </g>
 <!-- wifi -->
 <g fill="none" stroke="#111" stroke-width="1.3">
  <path d="M1146.5 755 a12 12 0 0 1 12-12 M1149.5 755 a9 9 0 0 1 9-9 M1152.5 755 a6 6 0 0 1 6-6"/>
 </g>
 <circle cx="1157" cy="754.5" r="1.5" fill="#111"/>
 <!-- mic -->
 <rect x="1171.5" y="739.8" width="6" height="10.5" rx="3" fill="#111"/>
 <path d="M1169.3 747.5 a5.2 5.2 0 0 0 10.4 0 M1174.5 752.8 v2.5 M1171.5 755.5 h6" fill="none" stroke="#111" stroke-width="1.1"/>
 <!-- speaker -->
 <path d="M1191.5 745.5 h3 l4-4 v13 l-4-4 h-3z" fill="none" stroke="#111" stroke-width="1.1"/>
 <path d="M1200.5 745 a4 4 0 0 1 0 6 M1202.8 743 a7 7 0 0 1 0 10 M1205 741 a10 10 0 0 1 0 14" fill="none" stroke="#111" stroke-width="1.1"/>
 <!-- notification -->
 <path d="M1325.5 740.5 h15 v11.5 h-5 l-2.5 3 l-2.5-3 h-5z" fill="none" stroke="#111" stroke-width="1.2"/>
 <rect x="1361" y="728" width="1" height="40" fill="#bcbcbc"/>
</svg>
<div class="a" style="left:88px;top:740px;font-size:15.5px;color:#222;line-height:18px">Поиск</div>
<div class="a" style="left:951px;top:740px;font-size:14px;color:#111;line-height:16px;white-space:pre;letter-spacing:-0.1px">1°C  Cloudy</div>
<div class="a" style="left:1218px;top:741px;font-size:12px;color:#111;line-height:14px;letter-spacing:-0.7px">УКР</div>
<div class="a" style="left:1267px;top:732px;font-size:12px;color:#111;line-height:14px;letter-spacing:-0.4px">14:37</div>
<div class="a" style="left:1253px;top:749.5px;font-size:12px;color:#111;line-height:14px;letter-spacing:-0.6px">08.04.2025</div>
</body></html>
